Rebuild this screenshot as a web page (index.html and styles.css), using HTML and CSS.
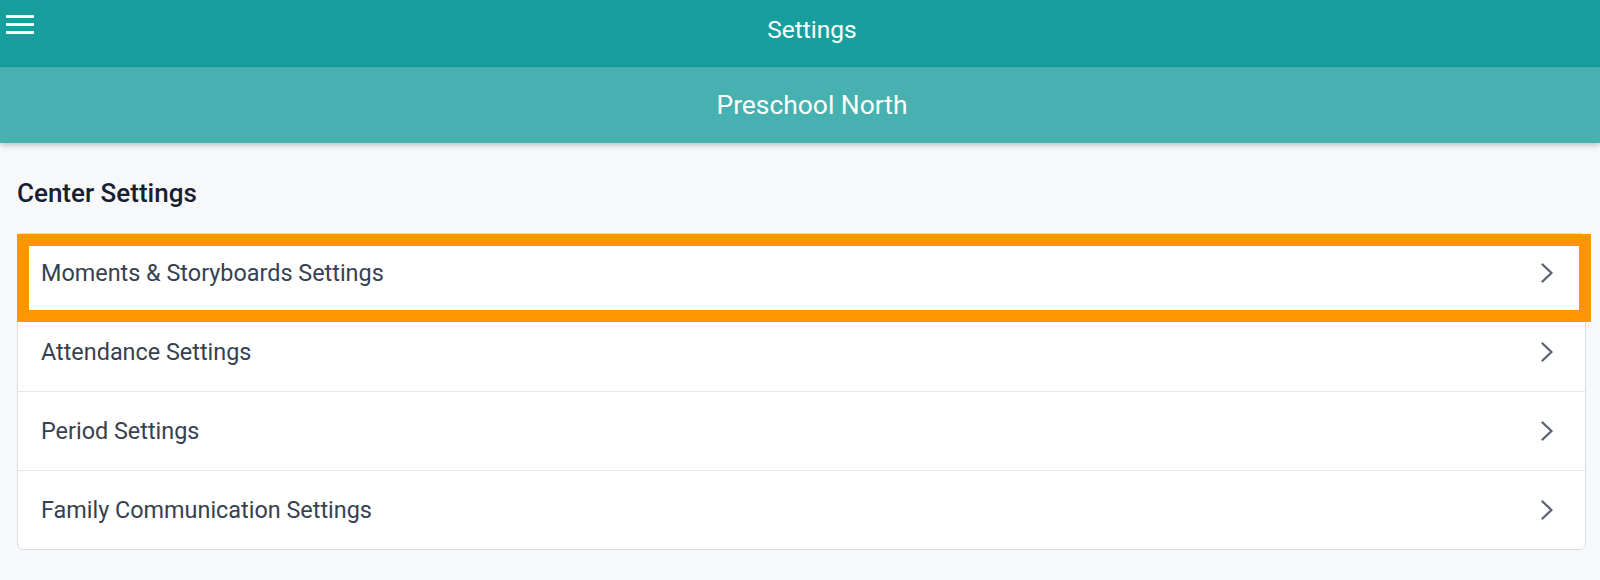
FILE: index.html
```
<!DOCTYPE html>
<html lang="en">
<head>
    <meta charset="UTF-8">
    <meta name="viewport" content="width=device-width, initial-scale=1.0">
    <title>Settings</title>
    <link rel="stylesheet" href="styles.css">
</head>
<body>
    <header class="topbar">
        <button class="menu-btn" type="button" aria-label="Menu">
            <span></span><span></span><span></span>
        </button>
        <h1>Settings</h1>
    </header>
    <div class="subbar">Preschool North</div>

    <main class="content">
        <h2>Center Settings</h2>
        <ul class="card">
            <li class="row highlighted">
                <span>Moments &amp; Storyboards Settings</span>
                <svg class="chev" viewBox="0 0 12 20"><path d="M1.5 1.5 L10.5 10 L1.5 18.5"/></svg>
                <div class="highlight"></div>
            </li>
            <li class="row">
                <span>Attendance Settings</span>
                <svg class="chev" viewBox="0 0 12 20"><path d="M1.5 1.5 L10.5 10 L1.5 18.5"/></svg>
            </li>
            <li class="row">
                <span>Period Settings</span>
                <svg class="chev" viewBox="0 0 12 20"><path d="M1.5 1.5 L10.5 10 L1.5 18.5"/></svg>
            </li>
            <li class="row">
                <span>Family Communication Settings</span>
                <svg class="chev" viewBox="0 0 12 20"><path d="M1.5 1.5 L10.5 10 L1.5 18.5"/></svg>
            </li>
        </ul>
    </main>
</body>
</html>
```

FILE: styles.css
```
body {
    font-family: Roboto, "Liberation Sans", sans-serif;
    background-color: #f7f8fa;
    margin: 0;
    padding: 0;
}
.topbar {
    height: 67px;
    padding-left: 24px;
    background-color: #189f9d;
    display: flex;
    align-items: center;
    justify-content: center;
    position: relative;
}
.topbar h1 {
    margin: 0 0 8px;
    color: #fff;
    font-size: 24.5px;
    font-weight: 400;
}
.menu-btn {
    position: absolute;
    left: 6px;
    top: 15px;
    width: 28px;
    padding: 0;
    border: none;
    background: none;
    display: flex;
    flex-direction: column;
    gap: 5px;
}
.menu-btn span {
    display: block;
    height: 3px;
    background-color: #fff;
    border-radius: 1px;
}
.subbar {
    height: 76px;
    padding-left: 24px;
    background-color: #46b1b0;
    color: #fff;
    font-size: 26.4px;
    display: flex;
    align-items: center;
    justify-content: center;
    box-shadow: 0 2px 6px rgba(0, 0, 0, 0.25);
    position: relative;
}
.content {
    padding: 35px 14px 0 17px;
}
.content h2 {
    margin: 0 0 25px;
    font-size: 26px;
    font-weight: 500;
    color: #172032;
}
.card {
    list-style: none;
    margin: 0;
    padding: 0;
    background-color: #fff;
    border: 1px solid #d7dbe2;
    border-radius: 6px;
}
.row {
    height: 78px;
    display: flex;
    align-items: center;
    justify-content: space-between;
    padding: 0 32px 0 23px;
    border-top: 1px solid #e6e8ed;
    color: #364152;
    font-size: 23.4px;
    position: relative;
}
.row:first-child {
    border-top: none;
}
.chev {
    width: 12px;
    height: 20px;
    fill: none;
    stroke: #5c6372;
    stroke-width: 2.4;
    stroke-linecap: round;
    stroke-linejoin: round;
}
.highlight {
    position: absolute;
    z-index: 1;
    left: -1px;
    top: 0;
    width: 1574px;
    height: 88px;
    box-sizing: border-box;
    border: 12px solid #ff9500;
}
```
